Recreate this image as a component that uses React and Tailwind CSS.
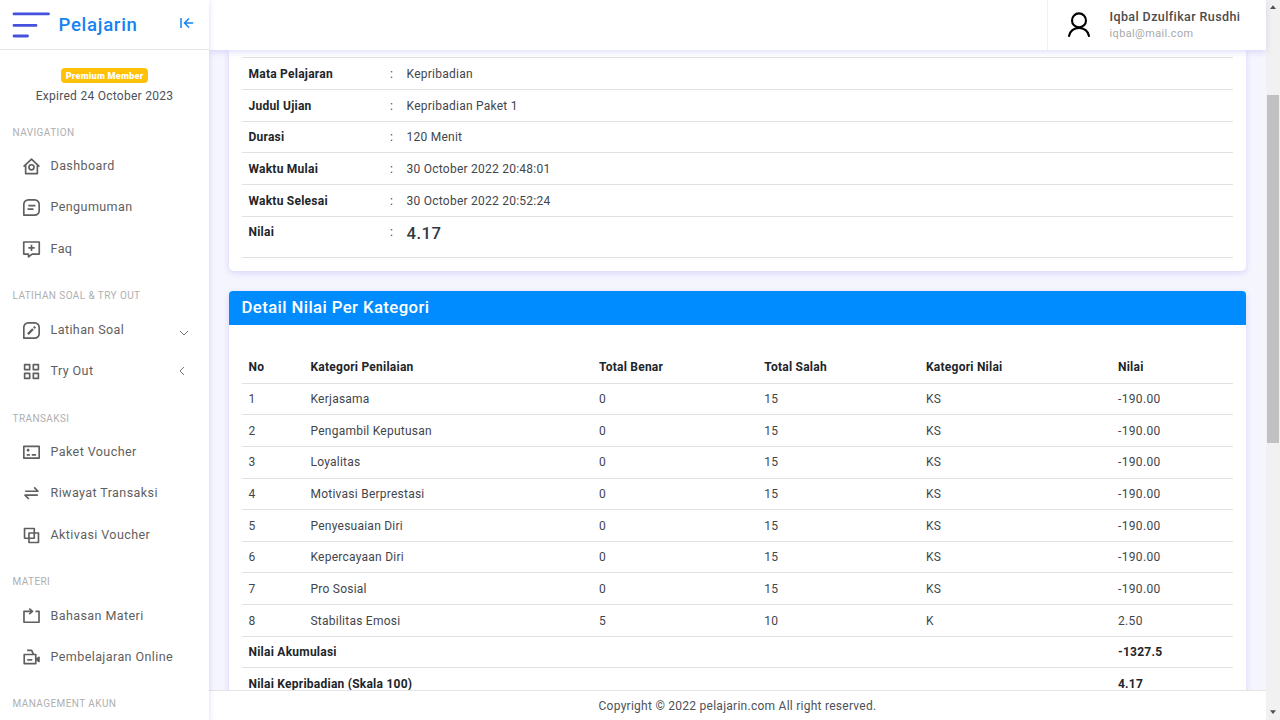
import React from "react";

function Icon({ children, size = "size-[19px]", width = 2.1 }) {
  return (
    <svg viewBox="0 0 24 24" className={`${size} shrink-0`} fill="none" stroke="currentColor" strokeWidth={width} strokeLinejoin="round">
      {children}
    </svg>
  );
}

const icons = {
  home: (
    <>
      <path d="M2 12.2 12 2.6l10 9.6" />
      <path d="M4.6 10.5V21h14.8V10.5" />
      <circle cx="12" cy="13" r="3.2" />
    </>
  ),
  note: (
    <>
      <path d="M2.3 21.7V8a5.7 5.7 0 0 1 5.7-5.7h8A5.7 5.7 0 0 1 21.7 8v8a5.7 5.7 0 0 1-5.7 5.7z" />
      <path d="M8 9.7h9M7 14h7.5" />
    </>
  ),
  faq: (
    <>
      <path d="M2.2 2.5h19.6v15.3h-9l-4.6 3.6v-3.6h-6z" />
      <path d="M12 6v8M8 10h8" />
    </>
  ),
  edit: (
    <>
      <path d="M2.3 21.7V8a5.7 5.7 0 0 1 5.7-5.7h8A5.7 5.7 0 0 1 21.7 8v8a5.7 5.7 0 0 1-5.7 5.7z" />
      <path d="m7.5 16.5 6.4-6.4M15 9l1.7-1.7" strokeWidth="3" strokeLinejoin="miter" />
    </>
  ),
  grid: (
    <path d="M3.3 3.3h6.4v6.4H3.3zM14.3 3.3h6.4v6.4h-6.4zM3.3 14.3h6.4v6.4H3.3zM14.3 14.3h6.4v6.4h-6.4z" />
  ),
  voucher: (
    <>
      <path d="M2.3 4.2h19.4v15H2.3z" />
      <path d="M6 9h3.4M6 15h4M12.3 15h5.5" />
      <path d="M7.7 7.3v3.4" />
    </>
  ),
  transfer: <path d="M4 9.2h16.2l-4.8-5M20 14H3.8l4.8 5" />,
  copy: <path d="M3.2 3.2h12.3v12.3H3.2zM8.8 8.8h12v12h-12z" />,
  repost: (
    <>
      <path d="M13 5.5H2.5v13.8h19V5.5H17" />
      <path d="m9.2 2 4 3.5-4 3.5" />
    </>
  ),
  video: (
    <>
      <path d="M2.8 8.2h14.6v11.6H2.8zM6.5 3h5.7l2.3 5" />
      <path d="M6.5 15h6.5" />
      <path d="m18.3 13.7 3.4-2.3v6l-3.4-2.3z" fill="currentColor" strokeWidth="1.5" />
    </>
  ),
};

const groups = [
  ["NAVIGATION", [["home", "Dashboard"], ["note", "Pengumuman"], ["faq", "Faq"]]],
  ["LATIHAN SOAL & TRY OUT", [["edit", "Latihan Soal", "down"], ["grid", "Try Out", "left"]]],
  ["TRANSAKSI", [["voucher", "Paket Voucher"], ["transfer", "Riwayat Transaksi"], ["copy", "Aktivasi Voucher"]]],
  ["MATERI", [["repost", "Bahasan Materi"], ["video", "Pembelajaran Online"]]],
  ["MANAGEMENT AKUN", []],
];

function Chevron({ dir }) {
  return (
    <svg viewBox="0 0 10 10" className={dir === "down" ? "ml-auto mt-[5px] size-[10px]" : "ml-auto mr-[2px] size-[10px]"} fill="none" stroke="#777" strokeWidth="1">
      <path d={dir === "down" ? "M1 3l4 4 4-4" : "M7 1L3 5l4 4"} />
    </svg>
  );
}

function Sidebar() {
  return (
    <aside className="relative z-20 flex w-[209px] shrink-0 flex-col overflow-hidden bg-white shadow-[0_2px_6px_rgba(80,70,230,0.2)]">
      <div className="flex h-[50px] shrink-0 items-center border-b border-[#e4e4e4] pl-[12px]">
        <svg viewBox="0 0 38 28" className="h-[28px] w-[38px]" stroke="#4550dc" strokeWidth="2.8" strokeLinecap="round">
          <path d="M2 2.9h34.5M2 14.4h22M2 25h13.5" />
        </svg>
        <span className="ml-[8.5px] text-[18.6px] font-medium leading-6 tracking-[0.7px] text-[#1683f3]">Pelajarin</span>
        <svg viewBox="0 0 14 12" className="ml-auto mr-[15px] mt-[-3px] h-[12px] w-[14px]" fill="none" stroke="#1683f3" strokeWidth="1.5">
          <path d="M1 1v10M13.2 6H5M9 1.5 4.5 6 9 10.5" />
        </svg>
      </div>
      <div className="flex h-[56.1px] shrink-0 flex-col items-center pt-[18px]">
        <span className="flex h-[15px] items-center rounded-[4px] bg-[#ffc107] px-[5px] pt-px text-[9.2px] font-black tracking-[0.2px] text-white">Premium Member</span>
        <span className="mt-[4.5px] text-[12px] leading-4 tracking-[0.27px] text-[#4c5258]">Expired 24 October 2023</span>
      </div>
      {groups.map(([label, items]) => (
        <div key={label} className="shrink-0">
          <div className="h-[40px] pl-[12.5px] pt-[18.5px] text-[10px] leading-4 tracking-[0.42px] text-[#b0afaf]">{label}</div>
          {items.map(([icon, text, dir]) => (
            <div key={text} className="flex h-[41.2px] items-center pl-[22px] pr-[20px] text-[#5f5f5f]">
              <Icon>{icons[icon]}</Icon>
              <span className="ml-[9.5px] text-[12.55px] tracking-[0.4px]">{text}</span>
              {dir && <Chevron dir={dir} />}
            </div>
          ))}
        </div>
      ))}
    </aside>
  );
}

const info = [
  ["Mata Pelajaran", "Kepribadian"],
  ["Judul Ujian", "Kepribadian Paket 1"],
  ["Durasi", "120 Menit"],
  ["Waktu Mulai", "30 October 2022 20:48:01"],
  ["Waktu Selesai", "30 October 2022 20:52:24"],
];

const rows = [
  ["Kerjasama", "0", "15", "KS", "-190.00"],
  ["Pengambil Keputusan", "0", "15", "KS", "-190.00"],
  ["Loyalitas", "0", "15", "KS", "-190.00"],
  ["Motivasi Berprestasi", "0", "15", "KS", "-190.00"],
  ["Penyesuaian Diri", "0", "15", "KS", "-190.00"],
  ["Kepercayaan Diri", "0", "15", "KS", "-190.00"],
  ["Pro Sosial", "0", "15", "KS", "-190.00"],
  ["Stabilitas Emosi", "5", "10", "K", "2.50"],
];

const infoGrid = "grid grid-cols-[141.6px_16.5px_1fr] border-b border-[#dfe1e4] pl-[6.5px]";
const scoreGrid = "grid h-[31.67px] grid-cols-[62px_288.5px_165.3px_161.7px_192px_1fr] items-center border-b border-[#dfe1e4] pl-[6.5px]";
const totalGrid = "grid h-[31.67px] grid-cols-[869.5px_1fr] items-center border-b border-[#dfe1e4] pl-[6.5px] font-bold text-[#212529]";

function Main() {
  return (
    <main className="min-h-0 flex-1 overflow-hidden bg-[#f5f5fe] pl-[19.5px] pr-[20px] text-[12px] tracking-[0.24px] text-[#3f464c]">
      <section className="h-[220.5px] rounded-b-[5px] bg-white px-[13.5px] pt-[7.3px] shadow-[0_2px_6px_rgba(80,70,230,0.18)]">
        <div className="border-t border-[#dfe1e4]">
          {info.map(([k, v]) => (
            <div key={k} className={`${infoGrid} h-[31.7px] items-center pt-[0.5px]`}>
              <span className="font-bold text-[#212529]">{k}</span>
              <span>:</span>
              <span>{v}</span>
            </div>
          ))}
          <div className={`${infoGrid} h-[41px] items-start pt-[7.3px] leading-4`}>
            <span className="font-bold text-[#212529]">Nilai</span>
            <span>:</span>
            <span className="text-[16.74px] font-medium leading-[18.5px] tracking-[0.42px] text-[#32393f]">4.17</span>
          </div>
        </div>
      </section>
      <section className="mt-[20px] h-[480px] rounded-[5px] bg-white shadow-[0_2px_6px_rgba(80,70,230,0.18)]">
        <h2 className="flex h-[34.5px] items-center rounded-t-[4px] bg-[#008cff] pl-[13px] text-[16.74px] font-medium tracking-[0.4px] text-white">Detail Nilai Per Kategori</h2>
        <div className="px-[13.5px] pt-[26.9px]">
          <div className={`${scoreGrid} pt-[0.5px] font-bold text-[#212529]`}>
            <span>No</span>
            <span>Kategori Penilaian</span>
            <span>Total Benar</span>
            <span>Total Salah</span>
            <span>Kategori Nilai</span>
            <span>Nilai</span>
          </div>
          {rows.map((r, i) => (
            <div key={r[0]} className={`${scoreGrid} pt-[0.5px]`}>
              <span>{i + 1}</span>
              {r.map((c, j) => (
                <span key={j} className={j === 4 ? "tracking-[0.35px]" : ""}>{c}</span>
              ))}
            </div>
          ))}
          <div className={`${totalGrid} pt-[0.5px]`}>
            <span>Nilai Akumulasi</span>
            <span>-1327.5</span>
          </div>
          <div className={`${totalGrid} pt-[0.5px]`}>
            <span>Nilai Kepribadian (Skala 100)</span>
            <span>4.17</span>
          </div>
        </div>
      </section>
    </main>
  );
}

export default function App() {
  return (
    <div className="flex h-[720px] w-[1280px] overflow-hidden bg-white font-['Roboto','Liberation_Sans',sans-serif]">
      <Sidebar />
      <div className="flex min-w-0 flex-1 flex-col">
        <header className="relative z-10 flex h-[50px] shrink-0 justify-end bg-white shadow-[0_2px_6px_rgba(80,70,230,0.18)]">
          <div className="flex w-[219px] border-l border-[#f0f0f0] pl-[18px]">
            <svg viewBox="0 0 26 26" className="mt-[12px] size-[26px]" fill="none" stroke="#000" strokeWidth="2.1" strokeLinecap="round">
              <circle cx="13" cy="8.4" r="7" />
              <path d="M3 24a10.1 9.5 0 0 1 20 0" />
            </svg>
            <div className="ml-[17.5px] pt-[8px]">
              <p className="text-[12.5px] font-medium leading-[17px] tracking-[0.4px] text-[#4c4c4c]">Iqbal Dzulfikar Rusdhi</p>
              <p className="text-[10.9px] leading-[17px] tracking-[0.4px] text-[#a9a8a8]">iqbal@mail.com</p>
            </div>
          </div>
        </header>
        <Main />
        <footer className="flex h-[30px] shrink-0 items-center justify-center border-t border-[#e4e4e4] bg-white text-[12px] tracking-[0.26px] text-[#4c5258]">
          Copyright © 2022 pelajarin.com All right reserved.
        </footer>
      </div>
      <div className="flex w-[14px] shrink-0 flex-col items-center bg-[#f1f1f1]">
        <svg viewBox="0 0 8 5" className="mt-[5px] h-[4px] w-[6px] shrink-0" fill="#505050">
          <path d="M0 5l4-5 4 5z" />
        </svg>
        <div className="mt-[86px] h-[348px] w-[12px] shrink-0 bg-[#c1c1c1]" />
        <svg viewBox="0 0 8 5" className="mb-[6px] mt-auto h-[4px] w-[6px] shrink-0" fill="#505050">
          <path d="M0 0l4 5 4-5z" />
        </svg>
      </div>
    </div>
  );
}
